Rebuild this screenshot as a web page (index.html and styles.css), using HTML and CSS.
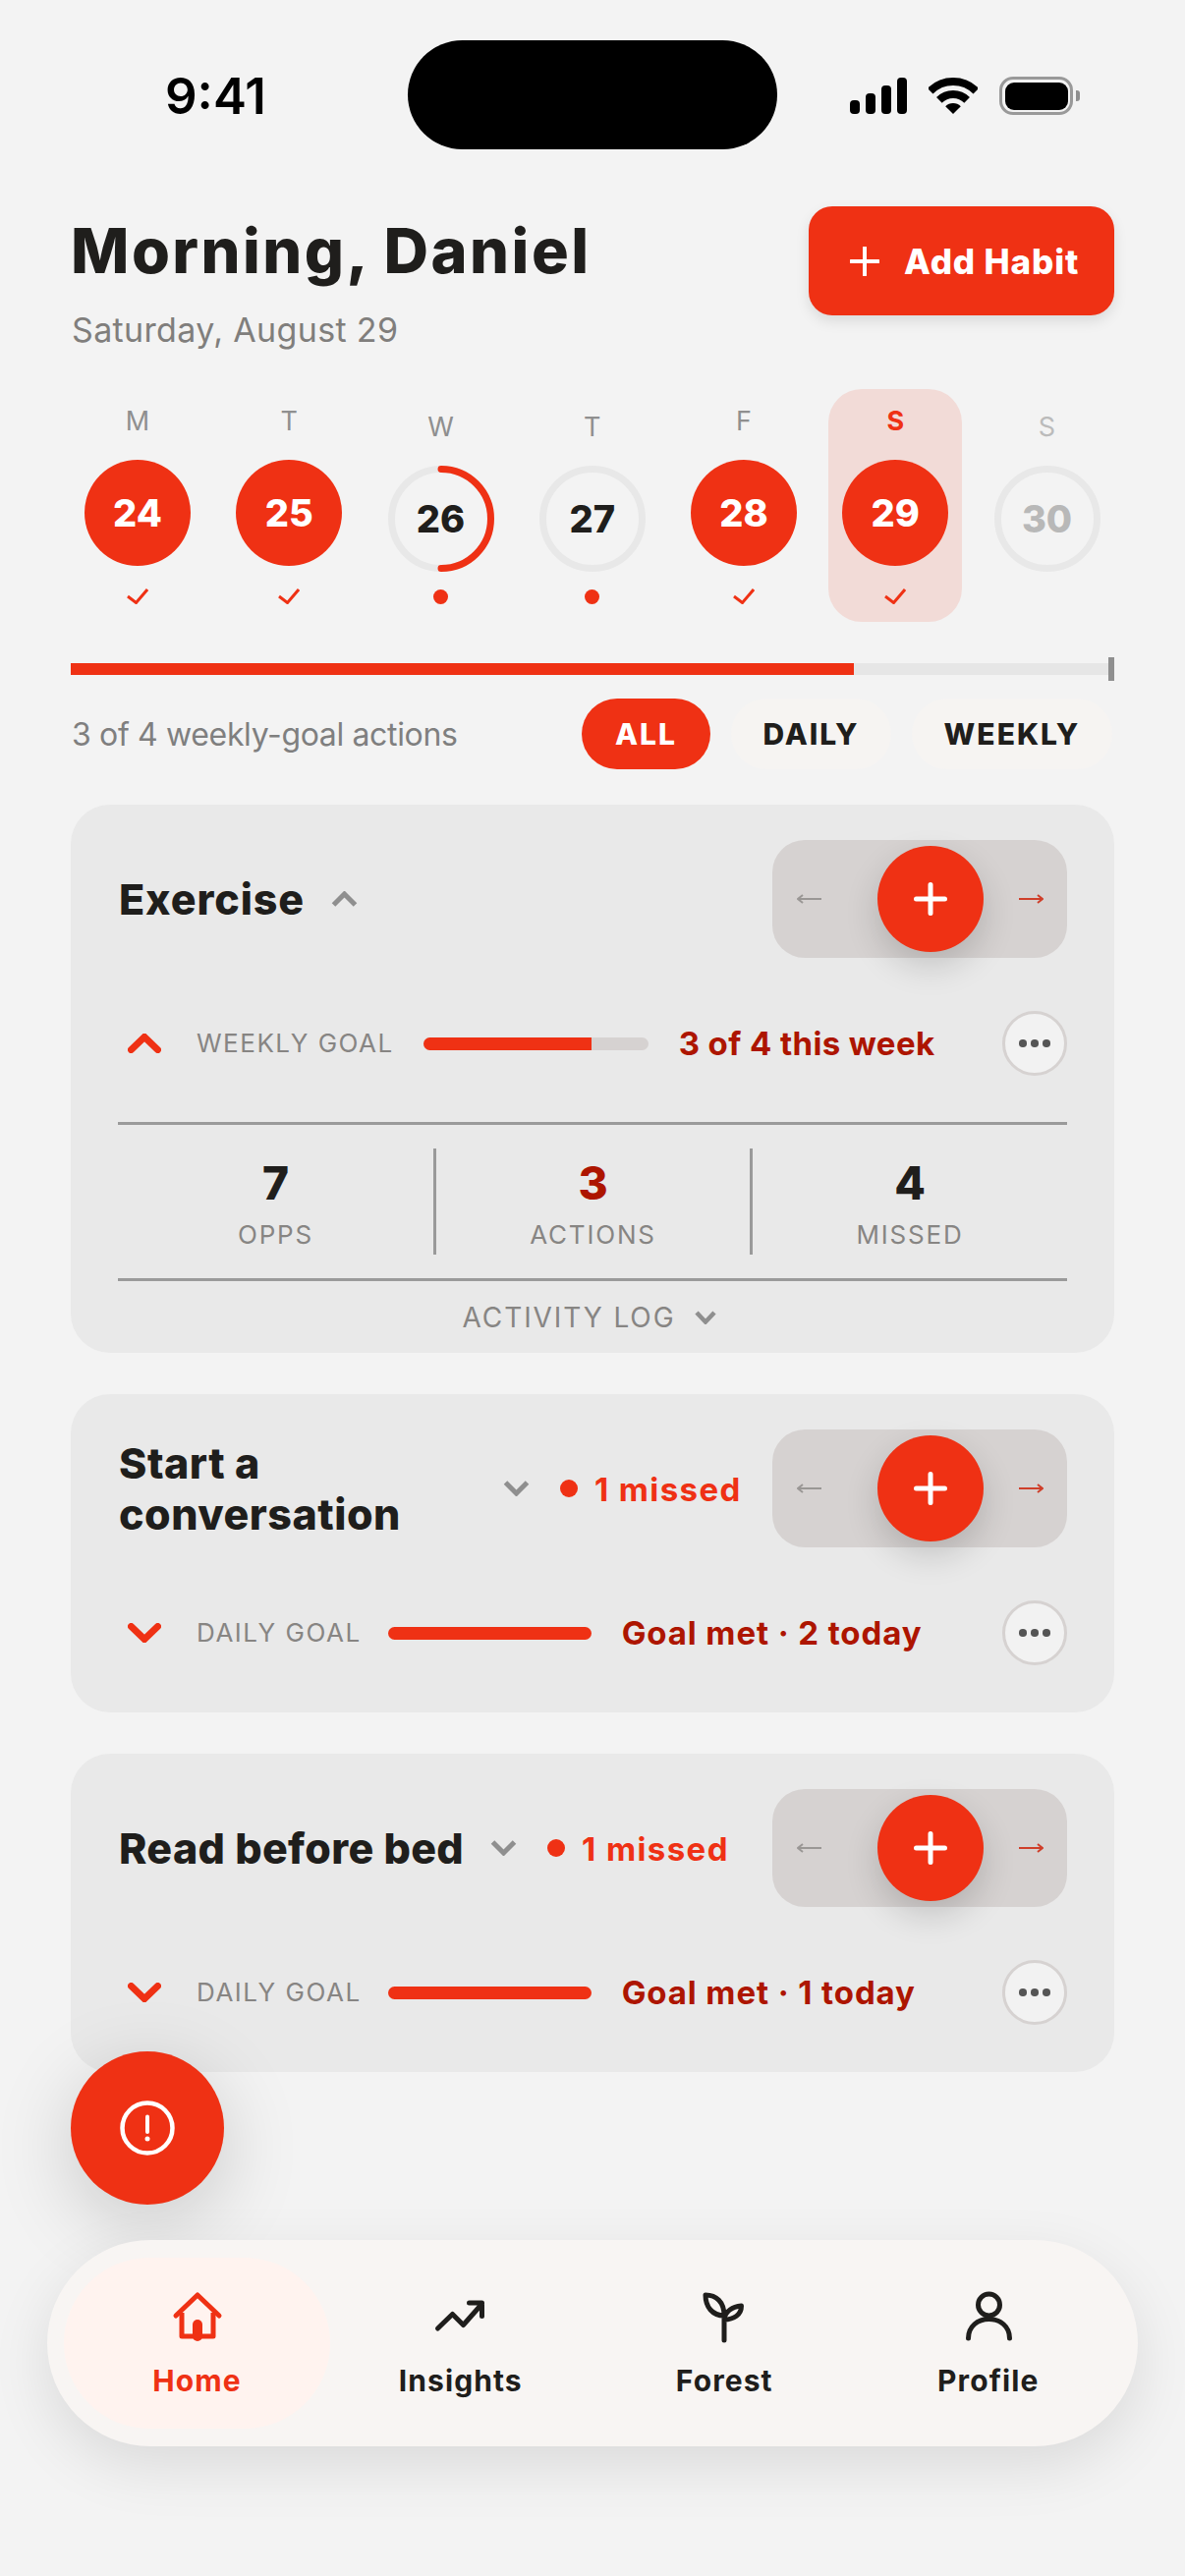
FILE: index.html
```html
<!DOCTYPE html>
<html lang="en">
<head>
<meta charset="utf-8">
<title>Habits</title>
<link rel="stylesheet" href="styles.css">
</head>
<body>
<div class="phone">
  <div class="status">
    <div class="time">9:41</div>
    <div class="island"></div>
    <div class="status-icons">
      <div class="signal"><i class="b1"></i><i class="b2"></i><i class="b3"></i><i class="b4"></i></div>
      <svg class="wifi" width="50" height="37" viewBox="0 0 50 37"><path d="M1.67 13.67A33 33 0 0 1 48.33 13.67M10.86 22.86A20 20 0 0 1 39.14 22.86" fill="none" stroke="#000" stroke-width="8"/><path d="M25 37L17.2 29.2A11 11 0 0 1 32.8 29.2Z" fill="#000"/></svg>
      <div class="battery"><div class="battery-fill"></div></div>
      <div class="battery-nub"></div>
    </div>
  </div>

  <header class="header">
    <div class="greet">
      <h1 class="title">Morning, Daniel</h1>
      <p class="date">Saturday, August 29</p>
    </div>
    <button class="add-btn">
      <svg width="30" height="30" viewBox="0 0 30 30"><path d="M15 1V29M1 15H29" stroke="#fff" stroke-width="4" stroke-linecap="round"/></svg>
      <span class="add-label">Add Habit</span>
    </button>
  </header>

  <section class="week">
    <div class="day">
      <div class="day-letter">M</div><div class="circle done">24</div>
      <svg class="tick" width="22" height="17" viewBox="0 0 22 17"><path d="M1 9L9.5 15.5L21 2" fill="none" stroke="#ef3114" stroke-width="3"/></svg>
    </div>
    <div class="day">
      <div class="day-letter">T</div><div class="circle done">25</div>
      <svg class="tick" width="22" height="17" viewBox="0 0 22 17"><path d="M1 9L9.5 15.5L21 2" fill="none" stroke="#ef3114" stroke-width="3"/></svg>
    </div>
    <div class="day low">
      <div class="day-letter">W</div>
      <div class="circle ring">26<svg class="arc" width="108" height="108" viewBox="0 0 108 108"><path d="M54 3.5A50.5 50.5 0 0 1 54 104.5" fill="none" stroke="#ef3114" stroke-width="7" stroke-linecap="round"/></svg></div>
      <div class="dot"></div>
    </div>
    <div class="day low">
      <div class="day-letter">T</div><div class="circle ring">27</div>
      <div class="dot"></div>
    </div>
    <div class="day">
      <div class="day-letter">F</div><div class="circle done">28</div>
      <svg class="tick" width="22" height="17" viewBox="0 0 22 17"><path d="M1 9L9.5 15.5L21 2" fill="none" stroke="#ef3114" stroke-width="3"/></svg>
    </div>
    <div class="day today">
      <div class="day-letter">S</div><div class="circle done">29</div>
      <svg class="tick" width="22" height="17" viewBox="0 0 22 17"><path d="M1 9L9.5 15.5L21 2" fill="none" stroke="#ef3114" stroke-width="3"/></svg>
    </div>
    <div class="day low future">
      <div class="day-letter">S</div><div class="circle ring">30</div>
    </div>
  </section>

  <div class="progress"><div class="progress-fill"></div><div class="progress-tick"></div></div>

  <div class="filter-row">
    <div class="filter-text">3 of 4 weekly-goal actions</div>
    <div class="pills">
      <div class="pill pill-all active">ALL</div>
      <div class="pill pill-daily">DAILY</div>
      <div class="pill pill-weekly">WEEKLY</div>
    </div>
  </div>

  <main class="cards">
    <article class="card">
      <div class="card-head">
        <div class="card-title short">Exercise</div>
        <svg class="chev-gray up" width="27" height="16" viewBox="0 0 27 16"><path d="M2.5 14L13.5 3L24.5 14" fill="none" stroke="#8f8f8f" stroke-width="5"/></svg>
        <div class="stepper">
          <svg class="arrow" width="26" height="14" viewBox="0 0 26 14"><path d="M25 7H2" stroke="#9a9795" stroke-width="2"/><path d="M6 3L1 7L6 11" fill="none" stroke="#9a9795" stroke-width="2"/></svg>
          <div class="plus-btn"><svg width="34" height="34" viewBox="0 0 34 34"><path d="M17 2.5V31.5M2.5 17H31.5" stroke="#fff" stroke-width="5" stroke-linecap="round"/></svg></div>
          <svg class="arrow next" width="26" height="14" viewBox="0 0 26 14"><path d="M1 7H24" stroke="#cf3f2a" stroke-width="2"/><path d="M20 3L25 7L20 11" fill="none" stroke="#cf3f2a" stroke-width="2"/></svg>
        </div>
      </div>
      <div class="goal-row">
        <svg class="chev-red" width="34" height="20" viewBox="0 0 34 20"><path d="M3.5 16.5L17 3.5L30.5 16.5" fill="none" stroke="#ef3114" stroke-width="7" stroke-linecap="round"/></svg>
        <div class="goal-label">WEEKLY GOAL</div>
        <div class="bar bar-weekly"><div class="bar-fill bar-75"></div></div>
        <div class="goal-text tight">3 of 4 this week</div>
        <div class="more"><i></i><i></i><i></i></div>
      </div>
      <div class="stats">
        <div class="stat"><div class="stat-num">7</div><div class="stat-label">OPPS</div></div>
        <div class="stat"><div class="stat-num dark-red">3</div><div class="stat-label">ACTIONS</div></div>
        <div class="stat"><div class="stat-num">4</div><div class="stat-label">MISSED</div></div>
      </div>
      <div class="activity">
        <span class="activity-label">ACTIVITY LOG</span>
        <svg width="22" height="14" viewBox="0 0 22 14"><path d="M2 2L11 11.5L20 2" fill="none" stroke="#8f8f8f" stroke-width="4.5"/></svg>
      </div>
    </article>

    <article class="card compact">
      <div class="card-head">
        <div class="card-title wrap">Start a conversation</div>
        <svg class="chev-gray" width="27" height="16" viewBox="0 0 27 16"><path d="M2.5 2L13.5 13L24.5 2" fill="none" stroke="#8f8f8f" stroke-width="5"/></svg>
        <div class="missed-dot"></div>
        <div class="missed">1 missed</div>
        <div class="stepper">
          <svg class="arrow" width="26" height="14" viewBox="0 0 26 14"><path d="M25 7H2" stroke="#9a9795" stroke-width="2"/><path d="M6 3L1 7L6 11" fill="none" stroke="#9a9795" stroke-width="2"/></svg>
          <div class="plus-btn"><svg width="34" height="34" viewBox="0 0 34 34"><path d="M17 2.5V31.5M2.5 17H31.5" stroke="#fff" stroke-width="5" stroke-linecap="round"/></svg></div>
          <svg class="arrow next" width="26" height="14" viewBox="0 0 26 14"><path d="M1 7H24" stroke="#cf3f2a" stroke-width="2"/><path d="M20 3L25 7L20 11" fill="none" stroke="#cf3f2a" stroke-width="2"/></svg>
        </div>
      </div>
      <div class="goal-row">
        <svg class="chev-red" width="34" height="20" viewBox="0 0 34 20"><path d="M3.5 3.5L17 16.5L30.5 3.5" fill="none" stroke="#ef3114" stroke-width="7" stroke-linecap="round"/></svg>
        <div class="goal-label">DAILY GOAL</div>
        <div class="bar bar-daily"><div class="bar-fill bar-100"></div></div>
        <div class="goal-text">Goal met · 2 today</div>
        <div class="more"><i></i><i></i><i></i></div>
      </div>
    </article>

    <article class="card compact">
      <div class="card-head">
        <div class="card-title long">Read before bed</div>
        <svg class="chev-gray" width="27" height="16" viewBox="0 0 27 16"><path d="M2.5 2L13.5 13L24.5 2" fill="none" stroke="#8f8f8f" stroke-width="5"/></svg>
        <div class="missed-dot"></div>
        <div class="missed">1 missed</div>
        <div class="stepper">
          <svg class="arrow" width="26" height="14" viewBox="0 0 26 14"><path d="M25 7H2" stroke="#9a9795" stroke-width="2"/><path d="M6 3L1 7L6 11" fill="none" stroke="#9a9795" stroke-width="2"/></svg>
          <div class="plus-btn"><svg width="34" height="34" viewBox="0 0 34 34"><path d="M17 2.5V31.5M2.5 17H31.5" stroke="#fff" stroke-width="5" stroke-linecap="round"/></svg></div>
          <svg class="arrow next" width="26" height="14" viewBox="0 0 26 14"><path d="M1 7H24" stroke="#cf3f2a" stroke-width="2"/><path d="M20 3L25 7L20 11" fill="none" stroke="#cf3f2a" stroke-width="2"/></svg>
        </div>
      </div>
      <div class="goal-row">
        <svg class="chev-red" width="34" height="20" viewBox="0 0 34 20"><path d="M3.5 3.5L17 16.5L30.5 3.5" fill="none" stroke="#ef3114" stroke-width="7" stroke-linecap="round"/></svg>
        <div class="goal-label">DAILY GOAL</div>
        <div class="bar bar-daily"><div class="bar-fill bar-100"></div></div>
        <div class="goal-text">Goal met · 1 today</div>
        <div class="more"><i></i><i></i><i></i></div>
      </div>
    </article>
  </main>

  <button class="fab" aria-label="Alert">
    <svg width="56" height="56" viewBox="0 0 56 56"><circle cx="28" cy="28" r="25.5" fill="none" stroke="#fff" stroke-width="4.5"/><path d="M28 16.5V32" stroke="#fff" stroke-width="4" stroke-linecap="round"/><circle cx="28" cy="39" r="2.5" fill="#fff"/></svg>
  </button>

  <nav class="nav">
    <div class="nav-item active">
      <svg width="60" height="60" viewBox="0 0 60 60"><path d="M8 29L30 8L52 29" fill="none" stroke="#ef3114" stroke-width="5" stroke-linecap="round" stroke-linejoin="round"/><path d="M14 26V50H46V26" fill="none" stroke="#ef3114" stroke-width="5" stroke-linejoin="round"/><path d="M30 38V50" stroke="#ef3114" stroke-width="10" stroke-linecap="round"/></svg>
      <span class="nav-label">Home</span>
    </div>
    <div class="nav-item">
      <svg width="60" height="60" viewBox="0 0 60 60"><path d="M6.5 42L21.5 27.5L32.5 38.5L51.5 17M38.5 16H51.5V29.5" fill="none" stroke="#1f1e1c" stroke-width="5" stroke-linecap="round" stroke-linejoin="round"/></svg>
      <span class="nav-label">Insights</span>
    </div>
    <div class="nav-item">
      <svg width="60" height="60" viewBox="0 0 60 60"><path d="M30 54V30M11 8C22 8 30 15 30 29C18 29 11 20 11 8ZM30 33C31 24 39 20 47.5 19C47.5 28 40 33 30 33Z" fill="none" stroke="#1f1e1c" stroke-width="5" stroke-linecap="round" stroke-linejoin="round"/></svg>
      <span class="nav-label">Forest</span>
    </div>
    <div class="nav-item">
      <svg width="60" height="60" viewBox="0 0 60 60"><circle cx="30.5" cy="18" r="11" fill="none" stroke="#1f1e1c" stroke-width="5"/><path d="M9.5 52C9.5 40 19 32.5 30.5 32.5C42 32.5 51.5 40 51.5 52" fill="none" stroke="#1f1e1c" stroke-width="5" stroke-linecap="round"/></svg>
      <span class="nav-label">Profile</span>
    </div>
  </nav>
</div>
</body>
</html>
```
FILE: styles.css
```css
* { box-sizing: border-box; }
html, body { margin: 0; padding: 0; background: #f3f3f3; }
body { font-family: Inter, "Liberation Sans", Arial, sans-serif; color: #1f1e1c; }
.phone { position: relative; width: 1206px; height: 2622px; overflow: hidden; }

.status { display: flex; align-items: center; padding: 41px 0 0 168px; height: 152px; }
.time { width: 247px; font-size: 51px; font-weight: 600; color: #000; line-height: 60px; padding-top: 2px; letter-spacing: 0; }
.island { width: 376px; height: 111px; border-radius: 56px; background: #000; }
.status-icons { display: flex; align-items: center; margin-left: 74px; padding-top: 2px; }
.signal { display: flex; align-items: flex-end; gap: 6px; height: 37px; }
.signal i { display: block; width: 10px; border-radius: 4px; background: #000; }
.b1 { height: 14px; }
.b2 { height: 21px; }
.b3 { height: 29px; }
.b4 { height: 37px; }
.wifi { margin-left: 22px; }
.battery { margin-left: 22px; width: 75px; height: 39px; border: 3.5px solid #999; border-radius: 14px; padding: 2.5px; }
.battery-fill { width: 100%; height: 100%; background: #000; border-radius: 9px; }
.battery-nub { margin-left: 3px; width: 4px; height: 11px; background: #8f8f8f; border-radius: 0 3px 3px 0; }

.header { display: flex; justify-content: space-between; align-items: flex-start; height: 148px; margin-top: 58px; padding: 0 72px; }
.title { margin: 7px 0 0; font-size: 63px; line-height: 76px; font-weight: 800; letter-spacing: 2.45px; }
.date { margin: 21px 0 0 1px; font-size: 34px; line-height: 44px; letter-spacing: .35px; color: #807e7c; }
.add-btn { display: flex; align-items: center; gap: 25px; width: 311px; height: 111px; padding: 0 0 0 42px; border: 0; border-radius: 24px; background: #ef3114; box-shadow: 0 6px 14px rgba(0,0,0,.1); font-family: inherit; }
.add-label { font-size: 35px; font-weight: 800; color: #fff; letter-spacing: .85px; }

.week { display: grid; grid-template-columns: repeat(7, 136px); column-gap: 18.25px; margin: 38px 0 0 72px; height: 237px; }
.day { display: flex; flex-direction: column; align-items: center; padding-top: 19px; border-radius: 34px; }
.day-letter { height: 28px; line-height: 28px; font-size: 27px; color: #8f8f8f; }
.circle { position: relative; display: flex; align-items: center; justify-content: center; flex: none; width: 108px; height: 108px; margin-top: 25px; margin-bottom: 22px; border-radius: 50%; font-size: 38px; font-weight: 800; }
.done { background: #ef3114; color: #fff; }
.ring { border: 7px solid #e8e8e8; color: #1f1e1c; }
.low { padding-top: 25px; }
.low .circle { margin-bottom: 18px; }
.dot { width: 15px; height: 15px; border-radius: 50%; background: #ef3114; }
.arc { position: absolute; left: -7px; top: -7px; }
.today { background: #f2dbd7; }
.today .day-letter { color: #ef3114; font-weight: 700; }
.future .day-letter { color: #bbb; }
.future .circle { color: #b8b8b8; }

.progress { position: relative; height: 12px; margin: 42px 72px 0; background: #e6e6e6; }
.progress-fill { width: 797px; height: 100%; background: #ef3114; }
.progress-tick { position: absolute; right: 0; top: -6px; width: 6px; height: 24px; background: #8f8f8f; }

.filter-row { display: flex; justify-content: space-between; align-items: center; margin: 24px 74px 0 72px; height: 72px; }
.filter-text { margin-left: 1px; font-size: 32px; letter-spacing: -.35px; color: #7f7f7f; }
.pills { display: flex; gap: 21px; }
.pill { display: flex; align-items: center; justify-content: center; height: 72px; border-radius: 36px; background: #f6f4f2; font-size: 30px; font-weight: 800; letter-spacing: 2px; color: #1f1e1c; }
.pill-all { width: 131px; }
.pill-daily { width: 163px; }
.pill-weekly { width: 204px; }
.pill.active { background: #ef3114; color: #fff; }

.cards { display: flex; flex-direction: column; gap: 42px; margin: 36px 72px 0; }
.card { padding: 36px 48px 0; border-radius: 40px; background: #e9e9e9; }
.card.compact { padding-bottom: 48px; }
.card-head { display: flex; align-items: center; height: 120px; padding-left: 1px; }
.card-title { flex: none; font-size: 43px; line-height: 52px; font-weight: 800; letter-spacing: .6px; }
.card-title.short { letter-spacing: .9px; }
.card-title.long { letter-spacing: .35px; }
.card-title.wrap { width: 364px; letter-spacing: .5px; }
.chev-gray { flex: none; margin-left: 27px; }
.missed-dot { flex: none; width: 18px; height: 18px; margin-left: 31px; border-radius: 50%; background: #ef3114; }
.missed { flex: none; margin-left: 17px; padding-top: 2px; font-size: 33px; font-weight: 700; letter-spacing: 1.4px; color: #ef3114; }
.stepper { display: flex; align-items: center; flex: none; width: 300px; height: 120px; margin-left: auto; padding-left: 25px; border-radius: 33px; background: #d6d2d1; }
.arrow { flex: none; }
.plus-btn { display: flex; align-items: center; justify-content: center; flex: none; width: 108px; height: 108px; margin-left: 56px; border-radius: 50%; background: #ef3114; box-shadow: 0 14px 34px rgba(0,0,0,.16); }
.arrow.next { margin-left: 35px; }

.goal-row { display: flex; align-items: center; height: 66px; margin-top: 54px; }
.chev-red { flex: none; margin-left: 10px; }
.goal-label { flex: none; margin-left: 36px; padding-bottom: 2px; font-size: 26px; letter-spacing: 1.5px; color: #878583; }
.bar { flex: none; height: 13px; margin-left: 30px; border-radius: 7px; background: #d6d2d1; overflow: hidden; }
.bar-weekly { width: 229px; }
.bar-daily { width: 207px; margin-left: 27px; }
.bar-fill { height: 100%; background: #ef3114; }
.bar-75 { width: 75%; }
.bar-100 { width: 100%; }
.goal-text { flex: none; margin-left: 31px; font-size: 33px; font-weight: 700; letter-spacing: .9px; color: #ad1500; }
.goal-text.tight { letter-spacing: .4px; }
.more { display: flex; align-items: center; justify-content: center; gap: 4.5px; flex: none; width: 66px; height: 66px; margin-left: auto; border: 3px solid #d6d2d1; border-radius: 50%; background: #f2f2f2; }
.more i { display: block; width: 7.5px; height: 7.5px; border-radius: 50%; background: #555; }

.stats { display: grid; grid-template-columns: 321px 322px 323px; margin-top: 47px; padding: 24px 0; border-top: 3px solid #9a9a9a; border-bottom: 3px solid #9a9a9a; }
.stat { height: 108px; padding-top: 7px; text-align: center; border-left: 3px solid #9a9a9a; }
.stat:first-child { border-left: 0; }
.stat-num { font-size: 46px; line-height: 56px; font-weight: 800; }
.dark-red { color: #ad1500; }
.stat-label { margin-top: 10px; font-size: 26px; line-height: 30px; letter-spacing: 1.8px; color: #878583; }
.activity { display: flex; align-items: center; justify-content: center; gap: 20px; height: 73px; padding-right: 6px; }
.activity-label { font-size: 28px; letter-spacing: 1.9px; color: #878583; }

.fab { position: absolute; left: 72px; top: 2088px; display: flex; align-items: center; justify-content: center; width: 156px; height: 156px; padding: 0; border: 0; border-radius: 50%; background: #ef3114; box-shadow: 0 20px 80px rgba(0,0,0,.17); }

.nav { position: absolute; left: 48px; top: 2280px; display: flex; width: 1110px; height: 210px; padding: 18px 17px; border-radius: 105px; background: #f8f5f3; box-shadow: 0 20px 60px rgba(0,0,0,.1); }
.nav-item { display: flex; flex-direction: column; align-items: center; flex: none; width: 268.5px; height: 174px; padding-top: 30px; border-radius: 87px; }
.nav-item.active { width: 271px; margin-right: -1.5px; background: #fff3ef; }
.nav-label { margin-top: 17px; font-size: 30px; line-height: 36px; font-weight: 700; letter-spacing: 1.1px; color: #1f1e1c; }
.nav-item.active .nav-label { color: #ef3114; }
```
